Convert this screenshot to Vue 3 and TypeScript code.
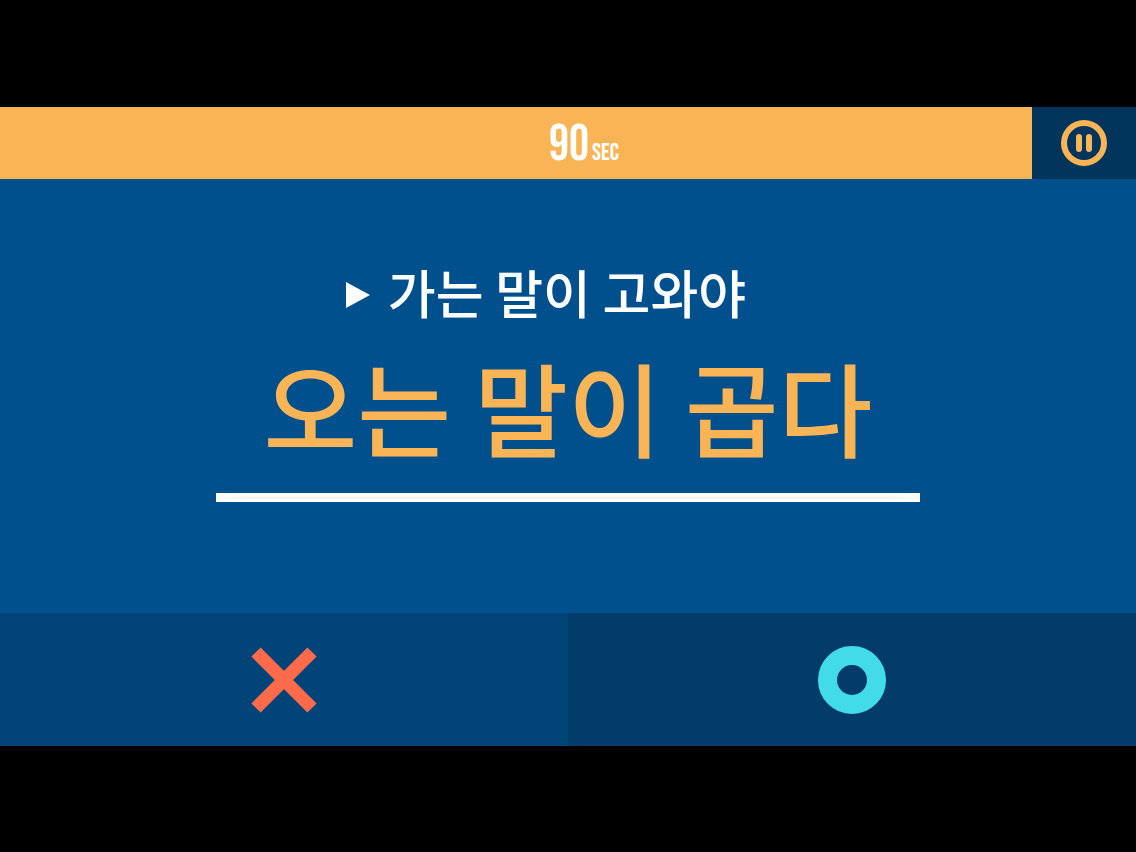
<script setup lang="ts">
import { ref } from 'vue'

const seconds = ref(90)
const paused = ref(false)
</script>

<template>
  <main class="stage">
    <header class="top">
      <div class="timer" role="timer">
        <span class="count">{{ seconds }}</span><span class="unit">SEC</span>
      </div>
      <button class="pause" type="button" aria-label="일시 정지" :aria-pressed="paused" @click="paused = !paused">
        <svg viewBox="0 0 46 46" aria-hidden="true">
          <circle cx="23" cy="23" r="20" fill="none" stroke="currentColor" stroke-width="6" />
          <rect x="15" y="14" width="6" height="18" rx="3" fill="currentColor" />
          <rect x="25" y="14" width="6" height="18" rx="3" fill="currentColor" />
        </svg>
      </button>
    </header>
    <section class="question">
      <div class="phrase">
        <p class="prompt">
          <svg class="arrow" viewBox="0 0 24 26" aria-hidden="true"><path d="M0 0L24 13L0 26Z" fill="currentColor" /></svg>
          <span class="given">가는 말이 고와야</span>
        </p>
        <h1>오는 말이 곱다</h1>
      </div>
    </section>
    <footer class="answers">
      <button class="wrong" type="button" aria-label="틀림">
        <svg viewBox="0 0 68 68" aria-hidden="true"><path d="M6 6L62 62M62 6L6 62" stroke="currentColor" stroke-width="13" /></svg>
      </button>
      <button class="right" type="button" aria-label="맞음">
        <svg viewBox="0 0 68 68" aria-hidden="true"><circle cx="34" cy="34" r="24.5" fill="none" stroke="currentColor" stroke-width="19" /></svg>
      </button>
    </footer>
  </main>
</template>

<style>
body {
  margin: 0;
  background: #000;
}
</style>

<style scoped>
.stage {
  box-sizing: border-box;
  min-height: 100vh;
  padding: 107px 0 106px;
  display: flex;
  flex-direction: column;
  background: #000;
  font-family: "Noto Sans CJK KR", sans-serif;
}
button {
  border: 0;
  padding: 0;
  display: grid;
  place-items: center;
  cursor: pointer;
}
.top {
  height: 72px;
  display: flex;
}
.timer {
  flex: 1;
  padding-left: 136px;
  display: flex;
  align-items: baseline;
  justify-content: center;
  gap: 3px;
  background: #f9b456;
  color: #fff;
  font-family: "Bebas Neue", "Roboto Condensed", "Liberation Sans Narrow", Roboto, sans-serif;
  font-weight: 400;
  line-height: 76px;
}
.count { font-size: 50px; }
.unit { font-size: 24px; }
.pause {
  width: 104px;
  background: #02355c;
  color: #f9b456;
}
.pause svg { width: 46px; height: 46px; }
.question {
  flex: 1;
  display: flex;
  justify-content: center;
  background: #01508e;
}
.phrase {
  box-sizing: border-box;
  width: 62%;
  align-self: flex-start;
  margin-top: 76px;
  border-bottom: 9px solid #fff;
}
.prompt {
  margin: 0;
  display: flex;
  align-items: center;
  padding-left: 130px;
  gap: 18px;
  color: #fff;
  font-size: 52px;
  font-weight: 500;
  line-height: 74px;
  white-space: nowrap;
}
.given { padding-bottom: 6px; }
.arrow { width: 24px; height: 26px; }
h1 {
  margin: 0;
  padding-bottom: 16px;
  color: #f9b456;
  font-size: 102px;
  font-weight: 500;
  line-height: 142px;
  text-align: center;
  white-space: nowrap;
}
.answers {
  height: 133px;
  display: grid;
  grid-template-columns: 1fr 1fr;
}
.answers svg { width: 68px; height: 68px; }
.wrong { background: #014478; color: #ff6b4a; }
.right { background: #023c68; color: #41dbe9; }
</style>
